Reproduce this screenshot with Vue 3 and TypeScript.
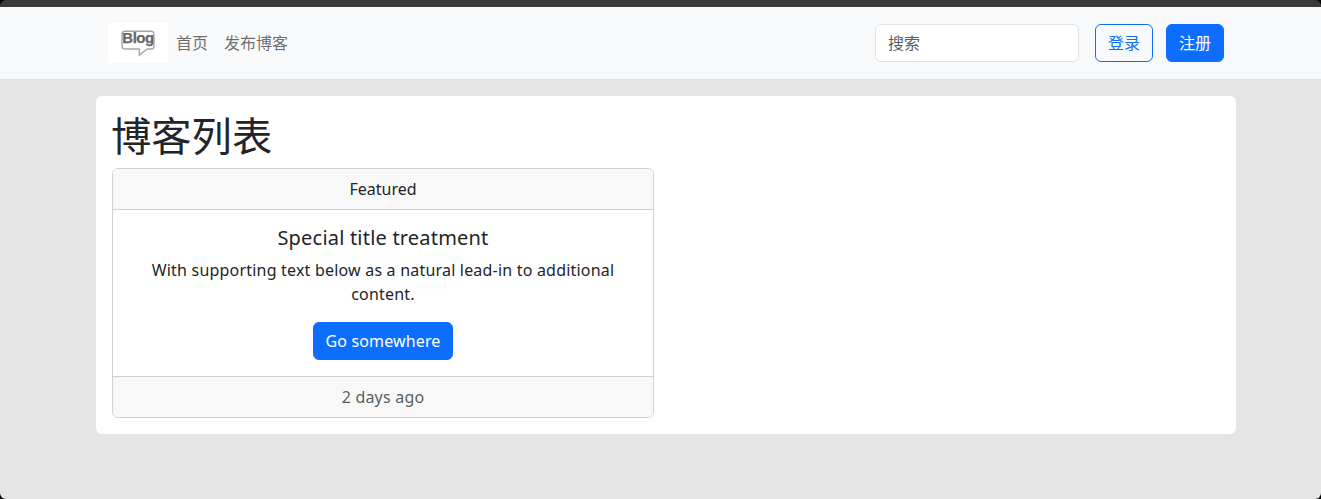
<script setup lang="ts">
const navLinks = ['首页', '发布博客']
</script>

<template>
  <div class="page">
    <header class="navbar">
      <div class="nav-inner">
        <a class="logo" href="#">
          <svg width="60" height="40" viewBox="0 0 60 40">
            <path
              d="M17 8.200H43Q46 8.200 46 11.200V23Q46 26 43 26H39.300L31.300 32V26H17Q14 26 14 23V11.200Q14 8.200 17 8.200Z"
              fill="none"
              stroke="#a6a6a6"
              stroke-width="1.400"
            />
            <text x="30" y="20.400" text-anchor="middle" class="logo-text">Blog</text>
          </svg>
        </a>
        <nav class="links">
          <a v-for="link in navLinks" :key="link" class="link" href="#">{{ link }}</a>
        </nav>
        <form class="search" @submit.prevent>
          <input class="search-input" type="search" placeholder="搜索" />
        </form>
        <button class="btn btn-outline" type="button">登录</button>
        <button class="btn btn-primary" type="button">注册</button>
      </div>
    </header>

    <main class="panel">
      <h1 class="heading">博客列表</h1>
      <section class="card">
        <div class="card-header">Featured</div>
        <div class="card-body">
          <h5 class="card-title">Special title treatment</h5>
          <p class="card-text">With supporting text below as a natural lead-in to additional content.</p>
          <a class="btn btn-primary btn-go" href="#">Go somewhere</a>
        </div>
        <div class="card-footer">2 days ago</div>
      </section>
    </main>
  </div>
</template>

<style>
html,
body {
  margin: 0;
  background: #000;
}
</style>

<style scoped>
.page {
  box-sizing: border-box;
  height: 499px;
  overflow: hidden;
  border-radius: 6px;
  border-top: 7px solid #3a3a3a;
  background: #e5e5e5;
  color: #212529;
  font-family: "Noto Sans", "Noto Sans CJK SC", sans-serif;
  font-size: 16px;
  line-height: 24px;
}

.navbar {
  height: 73px;
  background: #f8f9fa;
  border-bottom: 1px solid #dfe0e1;
  box-sizing: border-box;
  display: flex;
  align-items: center;
}

.nav-inner {
  box-sizing: border-box;
  width: 1140px;
  margin-left: 96px;
  padding: 0 12px;
  display: flex;
  align-items: center;
}

.logo {
  display: block;
  width: 60px;
  height: 40px;
  background: #fff;
}

.logo-text {
  font-family: "Liberation Sans", sans-serif;
  font-size: 15px;
  font-weight: 700;
  letter-spacing: -0.500px;
  fill: #666;
  stroke: #666;
  stroke-width: 0.250px;
}

.links {
  display: flex;
  flex: 1;
}

.link {
  padding: 8px;
  color: rgba(0, 0, 0, 0.58);
  text-decoration: none;
}

.search {
  margin-right: 16px;
}

.search-input {
  box-sizing: border-box;
  display: block;
  width: 204px;
  height: 38px;
  padding: 6px 12px;
  border: 1px solid #dee2e6;
  border-radius: 6px;
  background: #fff;
  font: inherit;
  outline: none;
  -webkit-appearance: none;
  appearance: none;
}

.search-input::placeholder {
  color: rgba(33, 37, 41, 0.75);
}

.btn {
  box-sizing: border-box;
  display: inline-block;
  height: 38px;
  padding: 6px 12px;
  border: 1px solid #0d6efd;
  border-radius: 6px;
  font: inherit;
  text-decoration: none;
}

.btn-outline {
  margin-right: 13px;
  background: transparent;
  color: #0d6efd;
}

.btn-primary {
  background: #0d6efd;
  color: #fff;
}

.btn-go {
  padding: 6px 11px;
  letter-spacing: 0.150px;
}

.panel {
  box-sizing: border-box;
  width: 1140px;
  margin: 16px 0 0 96px;
  padding: 16px;
  background: #fff;
  border-radius: 6px;
}

.heading {
  margin: 0 0 8px -1px;
  font-size: 40.300px;
  font-weight: 400;
  line-height: 48px;
}

.card {
  width: 542px;
  box-sizing: border-box;
  border: 1px solid #d0d1d2;
  border-radius: 6px;
  overflow: hidden;
  text-align: center;
}

.card-header {
  padding: 8px 16px;
  background: #f8f8f8;
  border-bottom: 1px solid #d0d1d2;
}

.card-body {
  padding: 16px;
}

.card-title {
  margin: 0 0 8px;
  font-size: 20px;
  font-weight: 400;
  line-height: 24px;
  letter-spacing: 0.200px;
}

.card-text {
  margin: 0 0 16px;
  letter-spacing: 0.200px;
}

.card-footer {
  padding: 8px 16px;
  background: #f8f8f8;
  border-top: 1px solid #d0d1d2;
  color: rgba(33, 37, 41, 0.75);
  letter-spacing: 0.200px;
}
</style>
